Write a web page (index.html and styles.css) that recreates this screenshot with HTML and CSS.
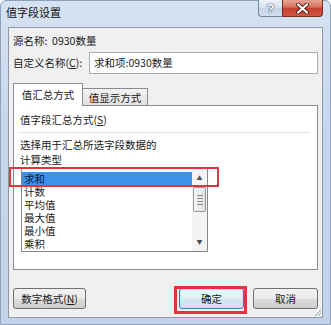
FILE: index.html
```html
<!DOCTYPE html>
<html lang="zh-CN">
<head>
    <meta charset="UTF-8">
    <title>值字段设置</title>
    <link rel="stylesheet" href="styles.css">
</head>
<body>
    <div class="window">
        <div class="titlebar">
            <span class="title">值字段设置</span>
            <div class="caption-btns">
                <span class="cap-btn help">?</span>
                <span class="cap-btn close">
                    <svg width="13" height="11" viewBox="0 0 13 11">
                        <path d="M2 1.5 L11 9.5 M11 1.5 L2 9.5" stroke="#5a1810" stroke-width="4" stroke-linecap="round"/>
                        <path d="M2 1.5 L11 9.5 M11 1.5 L2 9.5" stroke="#fff" stroke-width="2.2" stroke-linecap="round"/>
                    </svg>
                </span>
            </div>
        </div>

        <div class="client">
            <div class="row source">源名称:&nbsp; 0930数量</div>
            <div class="row custom">
                <label class="field-label">自定义名称(<u>C</u>):</label>
                <div class="textbox">求和项:0930数量</div>
            </div>

            <div class="tabs">
                <div class="tab active">值汇总方式</div>
                <div class="tab">值显示方式</div>
            </div>

            <div class="panel">
                <div class="group-title">值字段汇总方式(<u>S</u>)</div>
                <div class="sep"></div>
                <div class="hint">选择用于汇总所选字段数据的<br>计算类型</div>
                <div class="list-wrap">
                    <div class="listbox">
                        <ul class="items">
                            <li class="selected">求和</li>
                            <li>计数</li>
                            <li>平均值</li>
                            <li>最大值</li>
                            <li>最小值</li>
                            <li>乘积</li>
                        </ul>
                        <div class="scrollbar">
                            <span class="arrow">&#9650;</span>
                            <div class="thumb"><i></i><i></i><i></i><i></i></div>
                            <span class="arrow down">&#9660;</span>
                        </div>
                    </div>
                    <div class="mark mark-list"></div>
                </div>
            </div>

            <div class="buttons">
                <button class="btn btn-format">数字格式(<u>N</u>)</button>
                <div class="ok-wrap">
                    <button class="btn default">确定</button>
                    <div class="mark mark-ok"></div>
                </div>
                <button class="btn">取消</button>
            </div>

            <svg class="grip" width="10" height="10" viewBox="0 0 10 10">
                <path d="M9 3 L3 9 M9 6 L6 9" stroke="#9aa6b4" stroke-width="1"/>
            </svg>
        </div>
    </div>
</body>
</html>
```

FILE: styles.css
```css
body {
    margin: 0;
    font-family: "Noto Sans CJK SC", "Liberation Sans", sans-serif;
    font-size: 10.5px;
    color: #1a1a1a;
    background: #fff;
}
.window {
    width: 331px;
    height: 325px;
    box-sizing: border-box;
    border: 1px solid #8ea2bc;
    border-radius: 6px 6px 0 0;
    background: linear-gradient(180deg, #d6e2f0 0%, #c6d7ec 40%, #c2d4ea 100%);
    display: flex;
    flex-direction: column;
}
.titlebar {
    height: 26px;
    display: flex;
    align-items: flex-start;
}
.title {
    padding-left: 5px;
    font-size: 11px;
    line-height: 22px;
    color: #111;
}
.caption-btns {
    margin-left: auto;
    margin-right: 7px;
    margin-top: -1px;
    display: flex;
}
.cap-btn {
    height: 17px;
    box-sizing: border-box;
    display: flex;
    align-items: center;
    justify-content: center;
    border: 1px solid #6f84a0;
    border-top: none;
}
.help {
    width: 24px;
    border-right: none;
    border-radius: 0 0 0 4px;
    background: linear-gradient(180deg, #eef3f9 0%, #d5e0ee 50%, #c3d2e6 51%, #d4e0ee 100%);
    color: #fff;
    font-family: "Liberation Sans", sans-serif;
    font-weight: bold;
    font-size: 13px;
    text-shadow: 0 0 1px #3c4b60, 0 0 1px #3c4b60, 0 0 1px #3c4b60;
}
.close {
    width: 41px;
    border-color: #7a2a20;
    border-radius: 0 0 4px 0;
    background: linear-gradient(180deg, #e9a597 0%, #d6705f 45%, #c7402f 50%, #d2553f 100%);
}
.client {
    position: relative;
    flex: 1;
    margin: 0 7px 6px 7px;
    background: #f0f0f0;
    border: 1px solid #8d99a8;
    padding: 0 4px;
    display: flex;
    flex-direction: column;
}
.row {
    display: flex;
    align-items: center;
}
.source {
    margin-top: 5px;
    height: 16px;
    line-height: 16px;
}
.custom {
    margin-top: 3px;
    height: 22px;
}
.field-label {
    width: 76px;
    flex-shrink: 0;
    white-space: nowrap;
    line-height: 16px;
}
.textbox {
    flex: 1;
    height: 22px;
    box-sizing: border-box;
    border: 1px solid #abadb3;
    background: #fff;
    padding-left: 4px;
    line-height: 20px;
}
.tabs {
    margin-top: 9px;
    height: 22px;
    display: flex;
    align-items: flex-end;
}
.tab {
    box-sizing: border-box;
    border: 1px solid #898c95;
    border-bottom: none;
    text-align: center;
}
.tab.active {
    width: 70px;
    height: 23px;
    margin-bottom: -1px;
    line-height: 21px;
    background: #fff;
    position: relative;
    z-index: 1;
}
.tab:not(.active) {
    width: 65px;
    height: 17px;
    border-left: none;
    line-height: 17px;
    background: linear-gradient(180deg, #f2f2f2, #e2e2e2);
}
.panel {
    height: 165px;
    box-sizing: border-box;
    border: 1px solid #898c95;
    background: #fff;
    padding: 0 7px 0 6px;
}
.group-title {
    margin-top: 6px;
    line-height: 16px;
}
.sep {
    margin-top: 4px;
    height: 1px;
    background: #dfe3e8;
}
.hint {
    margin-top: 4px;
    line-height: 15px;
}
.list-wrap {
    position: relative;
    margin-top: 1px;
    margin-left: 1px;
    width: 187px;
}
.listbox {
    height: 84px;
    box-sizing: border-box;
    border: 1px solid #828790;
    display: flex;
}
.items {
    flex: 1;
    list-style: none;
    margin: 0;
    padding: 3px 0 0 0;
}
.items li {
    height: 13px;
    line-height: 13px;
    padding-left: 2px;
}
.items li.selected {
    background: #3b93e8;
    color: #0c1a40;
}
.scrollbar {
    width: 15px;
    background: #f4f4f4;
    display: flex;
    flex-direction: column;
    align-items: center;
}
.arrow {
    font-size: 6px;
    line-height: 8px;
    color: #4d4d4d;
    margin-top: 5px;
}
.arrow.down {
    margin-top: auto;
    margin-bottom: 5px;
}
.thumb {
    margin-top: 5px;
    width: 13px;
    height: 25px;
    box-sizing: border-box;
    border: 1px solid #979797;
    border-radius: 2px;
    background: linear-gradient(90deg, #f4f4f4, #e3e3e3);
    display: flex;
    flex-direction: column;
    align-items: center;
    justify-content: center;
    gap: 2px;
}
.thumb i {
    display: block;
    width: 6px;
    height: 1px;
    background: #8a8a8a;
}
.mark {
    position: absolute;
    box-sizing: border-box;
    border: 2px solid #e1343e;
    pointer-events: none;
}
.mark-list {
    left: -12px;
    top: -1px;
    width: 210px;
    height: 20px;
}
.buttons {
    margin-top: 18px;
    display: flex;
    align-items: center;
}
.btn {
    height: 21px;
    width: 65px;
    box-sizing: border-box;
    border: 1px solid #707070;
    border-radius: 3px;
    background: linear-gradient(180deg, #f2f2f2 0%, #ebebeb 50%, #dddddd 51%, #cfcfcf 100%);
    font-family: inherit;
    font-size: 10.5px;
    color: #1a1a1a;
    padding: 0;
    line-height: 19px;
}
.btn-format {
    width: 73px;
}
.ok-wrap {
    position: relative;
    margin-left: auto;
    margin-right: 9px;
    display: flex;
}
.btn.default {
    border-color: #3c7fb1;
    box-shadow: inset 0 0 0 1px #c4e3f6;
    background: linear-gradient(180deg, #f0f6fb 0%, #e4eef7 50%, #d5e5f2 51%, #cfe0ef 100%);
}
.mark-ok {
    left: -5px;
    top: -2px;
    width: 73px;
    height: 28px;
    border-width: 3px;
}
.grip {
    position: absolute;
    right: 0;
    bottom: 0;
}
```
